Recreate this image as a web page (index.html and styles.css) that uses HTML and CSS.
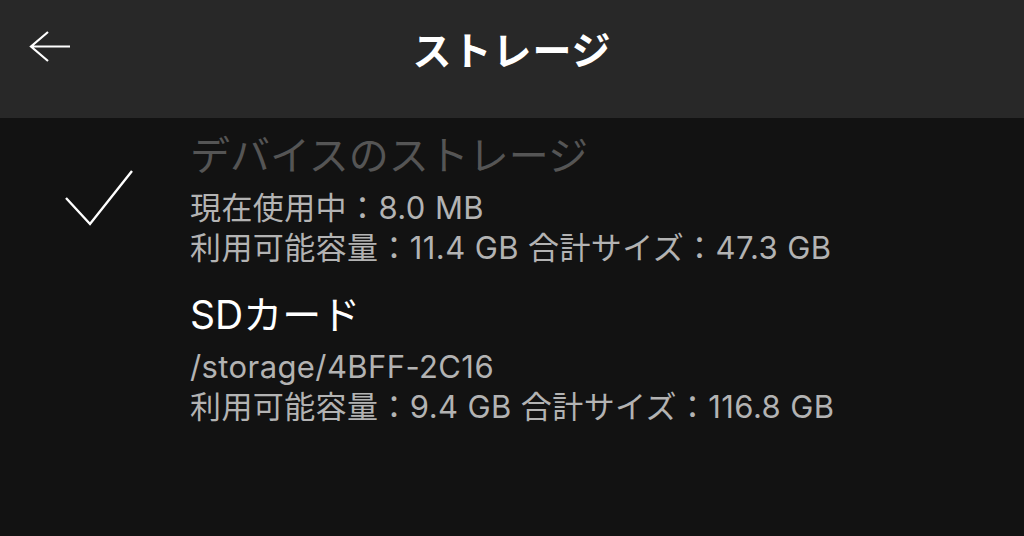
FILE: index.html
```html
<!DOCTYPE html>
<html lang="ja">
<head>
    <meta charset="UTF-8">
    <meta name="viewport" content="width=device-width, initial-scale=1.0">
    <title>ストレージ</title>
    <link rel="stylesheet" href="styles.css">
</head>
<body>
    <header class="top-bar">
        <button class="back" aria-label="戻る">
            <svg width="44" height="34" viewBox="0 0 44 34">
                <path d="M42 15.5H3M20 1L3 15.5L20 30" fill="none" stroke="#fff" stroke-width="2.2"/>
            </svg>
        </button>
        <h1 class="title">ストレージ</h1>
    </header>

    <div class="list">
        <div class="item">
            <div class="mark">
                <svg width="70" height="58" viewBox="0 0 70 58">
                    <path d="M2 29L26 55L68 2" fill="none" stroke="#fff" stroke-width="2.4"/>
                </svg>
            </div>
            <div class="info">
                <div class="name disabled">デバイスのストレージ</div>
                <div class="line">現在使用中：8.0 MB</div>
                <div class="line">利用可能容量：11.4 GB 合計サイズ：47.3 GB</div>
            </div>
        </div>

        <div class="item">
            <div class="mark"></div>
            <div class="info">
                <div class="name">SDカード</div>
                <div class="line">/storage/4BFF-2C16</div>
                <div class="line">利用可能容量：9.4 GB 合計サイズ：116.8 GB</div>
            </div>
        </div>
    </div>
</body>
</html>
```

FILE: styles.css
```css
body {
    margin: 0;
    height: 100vh;
    background-color: #121212;
    font-family: Inter, "Noto Sans CJK JP", sans-serif;
    color: #fff;
    overflow: hidden;
}

.top-bar {
    height: 118px;
    background-color: #282828;
    display: flex;
    align-items: center;
    justify-content: center;
    position: relative;
}

.back {
    position: absolute;
    left: 28px;
    top: 31px;
    padding: 0;
    border: none;
    background: none;
    display: flex;
}

.title {
    margin: 0 0 22px 0;
    font-family: "Noto Sans CJK JP", sans-serif;
    font-size: 39px;
    font-weight: bold;
    letter-spacing: 1px;
}

.list {
    padding-top: 13px;
}

.item {
    display: flex;
    align-items: center;
    margin-bottom: 22px;
}

.mark {
    width: 126px;
    padding-left: 64px;
    display: flex;
    padding-bottom: 4px;
}

.name {
    font-size: 39px;
    line-height: 50px;
    margin-bottom: 7px;
}

.name.disabled {
    font-size: 40px;
    color: #555555;
}

.line {
    font-size: 31px;
    line-height: 40px;
    letter-spacing: 0.4px;
    color: #b3b3b3;
}
```
